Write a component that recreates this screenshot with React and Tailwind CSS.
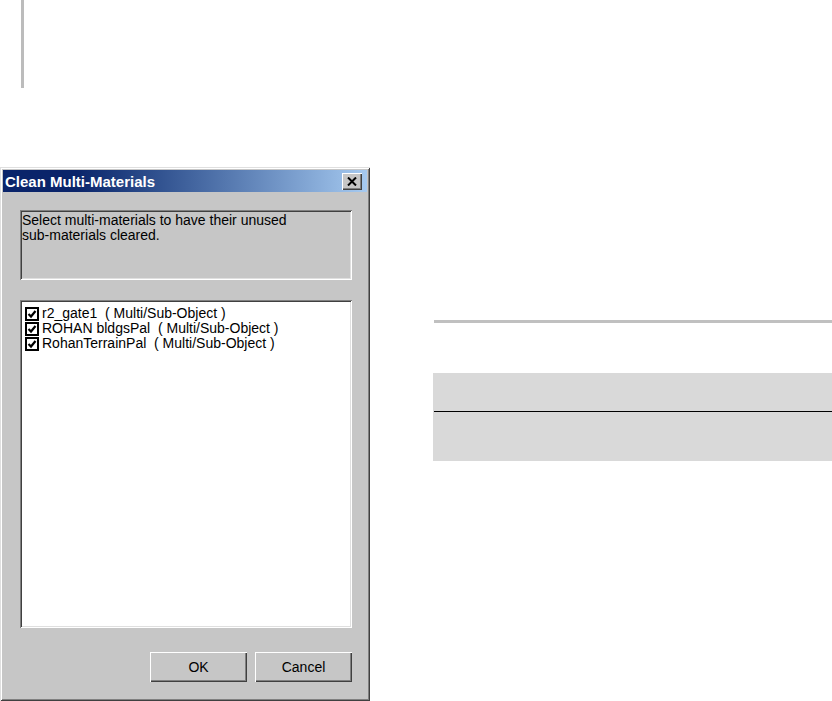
import React from "react";

const items = [
  "r2_gate1  ( Multi/Sub-Object )",
  "ROHAN bldgsPal  ( Multi/Sub-Object )",
  "RohanTerrainPal  ( Multi/Sub-Object )",
];

const CheckBox = () => (
  <svg width="14" height="14" viewBox="0 0 14 14" className="shrink-0">
    <rect x="1" y="1" width="12" height="12" fill="#fff" stroke="#000" strokeWidth="2" />
    <path d="M3.5 7 L6 9.5 L10.5 4" fill="none" stroke="#000" strokeWidth="2.2" />
  </svg>
);

const WinButton = ({ children }) => (
  <button className="w-[97px] h-[30px] bg-[#c6c6c6] text-[14px] text-black shadow-[inset_1px_1px_#ffffff,inset_-1px_-1px_#404040,inset_-2px_-2px_#808080]">
    {children}
  </button>
);

const App = () => {
  return (
    <div className="w-[832px] h-[701px] bg-white overflow-hidden font-['Liberation_Sans',Arial,sans-serif]">
      {/* top left rule */}
      <div className="pl-[21px]">
        <div className="w-[3px] h-[88px] bg-[#bcbcbc]" />
      </div>

      <div className="flex mt-[79px]">
        {/* Dialog */}
        <div className="w-[370px] h-[534px] p-[3px] bg-[#c6c6c6] shadow-[inset_1px_1px_#dfdfdf,inset_-1px_-1px_#404040,inset_2px_2px_#ffffff,inset_-2px_-2px_#808080] flex flex-col">
          {/* Title bar */}
          <div className="h-[22px] flex items-center justify-between pl-[2px] pr-[5px] bg-gradient-to-r from-[#0a246a] via-[#0a246a] via-20% to-[#a6caf0]">
            <span className="text-white font-bold text-[15px] leading-none">Clean Multi-Materials</span>
            <div className="w-[20px] h-[17px] bg-[#c6c6c6] flex items-center justify-center shadow-[inset_1px_1px_#ffffff,inset_-1px_-1px_#404040,inset_-2px_-2px_#808080]">
              <svg width="10" height="9" viewBox="0 0 10 9">
                <path d="M1 0.5 L9 8.5 M9 0.5 L1 8.5" stroke="#000" strokeWidth="2" />
              </svg>
            </div>
          </div>

          {/* Info box */}
          <div className="ml-[17px] mt-[18px] w-[332px] h-[70px] pl-[2px] pt-[3px] text-[14px] leading-[15px] text-black shadow-[inset_1px_1px_#808080,inset_-1px_-1px_#ffffff,inset_2px_2px_#404040,inset_-2px_-2px_#dfdfdf]">
            Select multi-materials to have their unused
            <br />
            sub-materials cleared.
          </div>

          {/* List */}
          <div className="ml-[17px] mt-[20px] w-[332px] h-[328px] bg-white pt-[6px] pl-[5px] shadow-[inset_1px_1px_#808080,inset_-1px_-1px_#ffffff,inset_2px_2px_#404040,inset_-2px_-2px_#dfdfdf]">
            {items.map((item) => (
              <div key={item} className="h-[15px] flex items-center gap-[3px] text-[14px] text-black whitespace-pre">
                <CheckBox />
                <span>{item}</span>
              </div>
            ))}
          </div>

          {/* Buttons */}
          <div className="mt-[24px] flex justify-end gap-[8px] pr-[15px]">
            <WinButton>OK</WinButton>
            <WinButton>Cancel</WinButton>
          </div>
        </div>

        {/* Right panel */}
        <div className="ml-[63px] w-[399px] flex flex-col">
          <div className="mt-[153px] ml-[1px] h-[3px] bg-[#c0c0c0]" />
          <div className="mt-[50px] bg-[#d9d9d9] h-[88px] flex flex-col">
            <div className="h-[38px]" />
            <div className="ml-[1px] h-px bg-black" />
          </div>
        </div>
      </div>
    </div>
  );
};

export default App;
